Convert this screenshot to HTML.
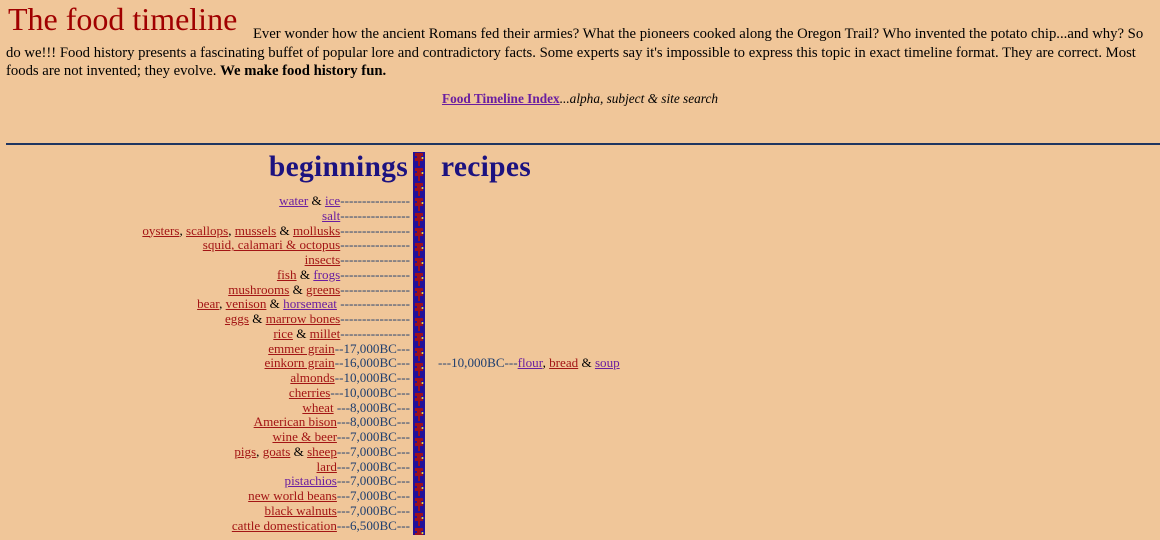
<!DOCTYPE html>
<html><head><meta charset="utf-8"><style>
body{margin:0;background:#f0c699;font-family:"Liberation Serif",serif;color:#000;width:1160px;height:535px;overflow:hidden;position:relative}
.top{position:absolute;left:6px;top:22px;width:1150px;font-size:14.7px;line-height:18.5px}
.title{font-size:32px;color:#a00000;position:relative;top:-8px;margin-left:2px;margin-right:12px;line-height:10px}
a.r{color:#a31515;text-decoration:underline}
a.p{color:#6a1ea0;text-decoration:underline}
.idx{position:absolute;top:91px;left:0;width:1160px;text-align:center;font-size:13.3px}
hr{position:absolute;top:143px;left:6px;width:1154px;margin:0;border:0;border-top:2px solid #1f3560}
.h{position:absolute;font-size:29.5px;font-weight:bold;color:#1c1280;top:151px;letter-spacing:0.3px}
.left{position:absolute;right:750px;top:194px;text-align:right;font-size:13.1px;line-height:14.75px;white-space:nowrap}
.d{color:#1f3f6f}
.stripe{position:absolute;left:413px;top:152px;width:12px;height:383px;background:#22109a}
.right{position:absolute;left:438px;top:356px;font-size:13.1px;line-height:14.75px}
</style></head><body>
<div class="top"><span class="title">The food timeline</span> Ever wonder how the ancient Romans fed their armies? What the pioneers cooked along the Oregon Trail? Who invented the potato chip...and why? So do we!!! Food history presents a fascinating buffet of popular lore and contradictory facts. Some experts say it's impossible to express this topic in exact timeline format. They are correct. Most foods are not invented; they evolve. <b>We make food history fun.</b></div>
<div class="idx"><a class="p" style="font-weight:bold">Food Timeline Index</a><i>...alpha, subject &amp; site search</i></div>
<hr>
<div class="h" style="right:752px">beginnings</div>
<div class="h" style="left:441px">recipes</div>
<div class="stripe"><svg width="12" height="383"><defs><pattern id="pt" width="12" height="15" patternUnits="userSpaceOnUse"><path d="M2 1h8v3h-2v2h2v3h-3v5h-2v-5h-3v-3h2v-2h-2z" fill="#9a1020"/><circle cx="9.5" cy="6" r="1" fill="#f0e040"/></pattern></defs><rect width="12" height="383" fill="url(#pt)"/></svg></div>
<div class="left">
<a class="p">water</a> &amp; <a class="p">ice</a><span class="d">----------------</span><br>
<a class="p">salt</a><span class="d">----------------</span><br>
<a class="r">oysters</a>, <a class="r">scallops</a>, <a class="r">mussels</a> &amp; <a class="r">mollusks</a><span class="d">----------------</span><br>
<a class="r">squid, calamari &amp; octopus</a><span class="d">----------------</span><br>
<a class="r">insects</a><span class="d">----------------</span><br>
<a class="r">fish</a> &amp; <a class="p">frogs</a><span class="d">----------------</span><br>
<a class="r">mushrooms</a> &amp; <a class="r">greens</a><span class="d">----------------</span><br>
<a class="r">bear</a>, <a class="r">venison</a> &amp; <a class="p">horsemeat</a> <span class="d">----------------</span><br>
<a class="r">eggs</a> &amp; <a class="r">marrow bones</a><span class="d">----------------</span><br>
<a class="r">rice</a> &amp; <a class="r">millet</a><span class="d">----------------</span><br>
<a class="r">emmer grain</a><span class="d">--17,000BC---</span><br>
<a class="r">einkorn grain</a><span class="d">--16,000BC---</span><br>
<a class="r">almonds</a><span class="d">--10,000BC---</span><br>
<a class="r">cherries</a><span class="d">---10,000BC---</span><br>
<a class="r">wheat</a> <span class="d">---8,000BC---</span><br>
<a class="r">American bison</a><span class="d">---8,000BC---</span><br>
<a class="r">wine &amp; beer</a><span class="d">---7,000BC---</span><br>
<a class="r">pigs</a>, <a class="r">goats</a> &amp; <a class="r">sheep</a><span class="d">---7,000BC---</span><br>
<a class="r">lard</a><span class="d">---7,000BC---</span><br>
<a class="p">pistachios</a><span class="d">---7,000BC---</span><br>
<a class="r">new world beans</a><span class="d">---7,000BC---</span><br>
<a class="r">black walnuts</a><span class="d">---7,000BC---</span><br>
<a class="r">cattle domestication</a><span class="d">---6,500BC---</span><br>
</div>
<div class="right"><span class="d">---10,000BC---</span><a class="p">flour</a>, <a class="r">bread</a> &amp; <a class="p">soup</a></div>
</body></html>
